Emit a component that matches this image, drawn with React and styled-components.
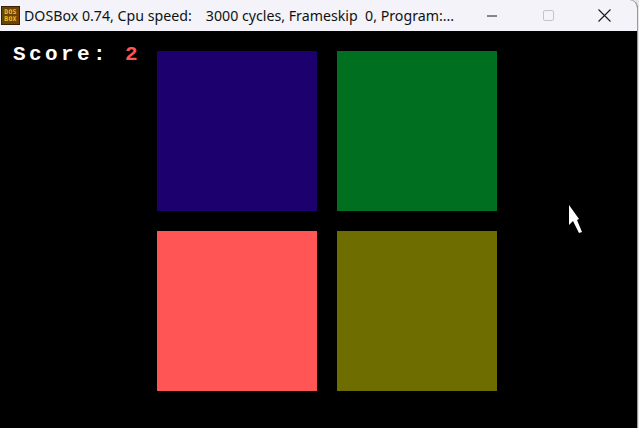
import React from "react";
import styled, { createGlobalStyle } from "styled-components";

const GlobalStyle = createGlobalStyle`
  html, body {
    margin: 0;
    padding: 0;
    background: #e6e6e6;
    overflow: hidden;
  }
`;

const Window = styled.div`
  width: 637px;
  height: 428px;
  display: flex;
  flex-direction: column;
  background: #000;
  border-right: 1px solid #9a9a9a;
  border-top-right-radius: 8px;
  overflow: hidden;
`;

const TitleBar = styled.div`
  height: 31px;
  flex: none;
  display: flex;
  align-items: center;
  background: #f3f3f9;
  font-family: "Noto Sans", "Open Sans", sans-serif;
  font-size: 14.2px;
  color: #111;
`;

const AppIcon = styled.div`
  width: 19px;
  height: 19px;
  margin: 0 4px 0 1px;
  background: #6e4306;
  border: 1px solid #3a2200;
  box-sizing: border-box;
  display: flex;
  flex-direction: column;
  align-items: center;
  justify-content: center;
  font-family: "DejaVu Sans Mono", monospace;
  font-size: 6.5px;
  font-weight: bold;
  line-height: 7px;
  color: #f2c21a;
  letter-spacing: 0.2px;
`;

const Title = styled.div`
  flex: 1;
  min-width: 0;
  white-space: pre;
`;

const Gap = styled.span`
  display: inline-block;
  width: ${(p) => p.w}px;
`;

const Controls = styled.div`
  display: flex;
  flex: none;
  height: 100%;
  margin-right: 5px;
`;

const Control = styled.div`
  width: 56px;
  height: 100%;
  display: flex;
  align-items: center;
  justify-content: center;
  color: ${(p) => (p.disabled ? "#c4c4c8" : "#1a1a1a")};
`;

const Screen = styled.div`
  position: relative;
  flex: 1;
  display: flex;
  align-items: flex-start;
  background: #000;
`;

const Score = styled.div`
  width: 144px;
  padding: 15px 0 0 13px;
  font-family: "Liberation Mono", "DejaVu Sans Mono", monospace;
  font-weight: bold;
  font-size: 21px;
  line-height: 18px;
  letter-spacing: 3.4px;
  color: #fff;
  white-space: pre;
`;

const Points = styled.span`
  color: #ff5555;
`;

const Board = styled.div`
  margin-top: 20px;
  display: grid;
  grid-template-columns: 160px 160px;
  grid-auto-rows: 160px;
  gap: 20px;
`;

const Pad = styled.div`
  background: ${(p) => p.color};
`;

const Cursor = styled.svg`
  position: absolute;
  left: 569px;
  top: 174px;
`;

export default function App() {
  return (
    <>
      <GlobalStyle />
      <Window>
        <TitleBar>
          <AppIcon>
            <span>DOS</span>
            <span>BOX</span>
          </AppIcon>
          <Title>
            DOSBox 0.74, Cpu speed:<Gap w={14} />3000 cycles, Frameskip  0, Program:...
          </Title>
          <Controls>
            <Control>
              <svg width="10" height="10" viewBox="0 0 10 10">
                <line x1="0" y1="5" x2="10" y2="5" stroke="currentColor" strokeWidth="1" />
              </svg>
            </Control>
            <Control disabled>
              <svg width="11" height="11" viewBox="0 0 11 11">
                <rect x="0.5" y="0.5" width="10" height="10" rx="1.5" fill="none" stroke="currentColor" strokeWidth="1" />
              </svg>
            </Control>
            <Control>
              <svg width="13" height="13" viewBox="0 0 13 13">
                <path d="M0.5 0.5 L12.5 12.5 M12.5 0.5 L0.5 12.5" stroke="currentColor" strokeWidth="1.1" />
              </svg>
            </Control>
          </Controls>
        </TitleBar>
        <Screen>
          <Score>
            Score: <Points>2</Points>
          </Score>
          <Board>
            <Pad color="#1c006e" />
            <Pad color="#007020" />
            <Pad color="#ff5555" />
            <Pad color="#6e6e00" />
          </Board>
          <Cursor width="16" height="30" viewBox="0 0 16 30">
            <polygon points="0,0 0,20 4,16 10,28 13,27 8,15 10,14" fill="#fff" />
          </Cursor>
        </Screen>
      </Window>
    </>
  );
}
